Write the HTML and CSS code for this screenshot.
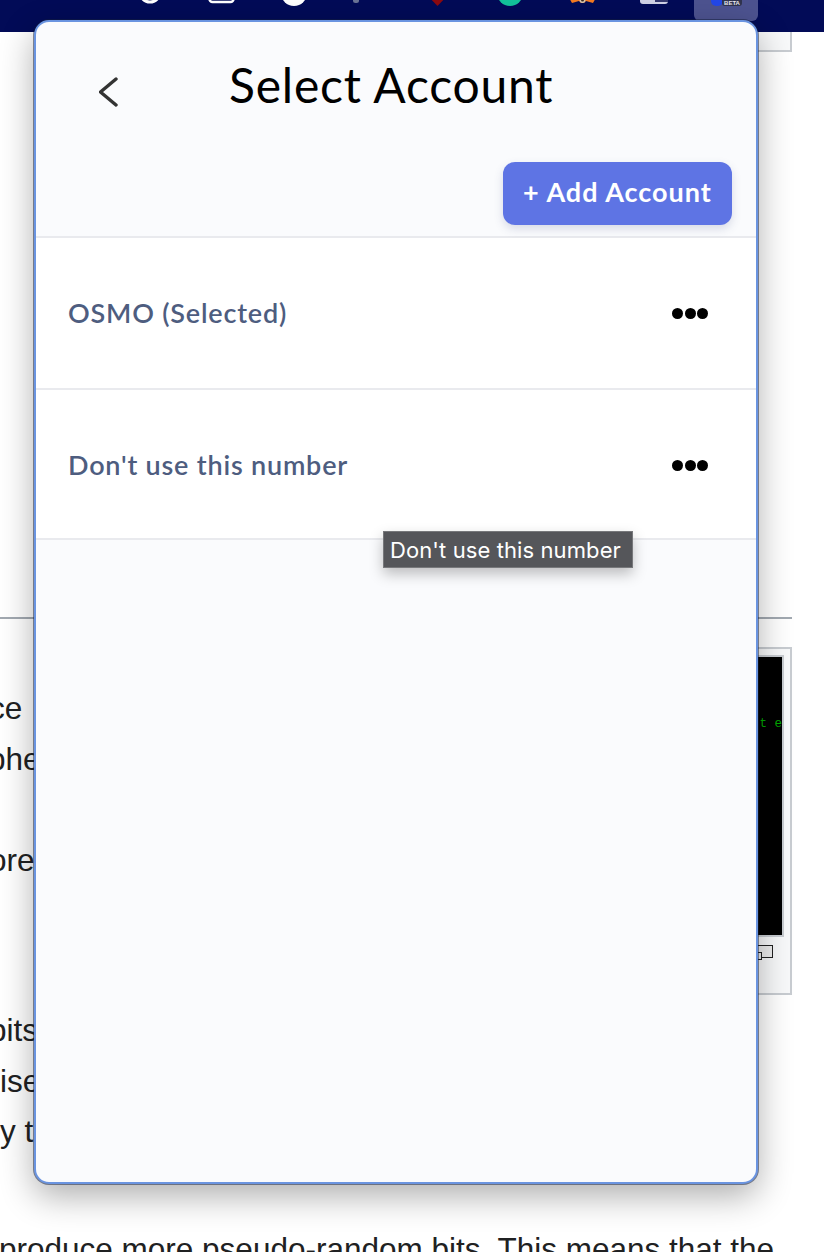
FILE: index.html
```html
<!DOCTYPE html>
<html lang="en">
<head>
<meta charset="utf-8">
<title>Select Account</title>
<link rel="stylesheet" href="styles.css">
</head>
<body>
<header class="toolbar">
  <svg class="strip" width="694" height="32" viewBox="0 0 694 32" aria-hidden="true">
    <circle cx="150" cy="-8" r="10" fill="none" stroke="#fff" stroke-width="3"/>
    <rect x="209.500" y="-14" width="24" height="16" rx="3" fill="none" stroke="#fff" stroke-width="2.500"/>
    <circle cx="294" cy="-7" r="13" fill="#fff"/>
    <rect x="353" y="-6" width="6" height="9" rx="2.500" fill="#6a7396"/>
    <path d="M426 -6 H449 L437.500 6 Z" fill="#8c0a10"/>
    <circle cx="510" cy="-7" r="13" fill="#13c39a"/>
    <path d="M568 -4 H597 L593 3 L586 1 A4 4 0 0 1 579 1 L572 3 Z" fill="#f47a22"/>
    <circle cx="582.500" cy="0" r="3" fill="#d9c7ae"/>
    <circle cx="582.500" cy="0" r="1.500" fill="#3b2b22"/>
    <rect x="640" y="-8" width="28" height="12" rx="3" fill="#d0d2e6"/>
    <rect x="655" y="-4" width="13" height="6" fill="#34386e"/>
  </svg>
  <div class="active-ext">
    <span class="ext-dot"></span>
    <span class="ext-beta">BETA</span>
  </div>
</header>

<main class="article">
  <div class="top-thumb"></div>
  <hr class="rule">
  <section class="body-row">
    <div class="lines">
      <p class="line off-ce">ce</p>
      <p class="line off-phe">phe</p>
      <p class="line">&nbsp;</p>
      <p class="line off-ore">ore</p>
      <p class="line">&nbsp;</p>
      <p class="line">&nbsp;</p>
      <p class="line off-bits">bits</p>
      <p class="line">ise</p>
      <p class="line">y t</p>
    </div>
    <figure class="thumb">
      <div class="screen"><span class="screen-text">t e</span></div>
      <div class="magnify"><span class="mag-big"></span><span class="mag-small"></span></div>
    </figure>
  </section>
  <p class="last-line">produce more pseudo-random bits. This means that the</p>
</main>

<section class="popup">
  <div class="popup-head">
    <div class="title-row">
      <svg class="back" width="24" height="36" viewBox="0 0 24 36" aria-hidden="true">
        <path d="M17 4 L1.500 17 L17 30" fill="none" stroke="#333" stroke-width="3.400" stroke-linecap="round" stroke-linejoin="round"/>
      </svg>
      <h1 class="title">Select Account</h1>
    </div>
    <div class="action-row">
      <button class="add-btn">+ Add Account</button>
    </div>
  </div>
  <div class="account account-first">
    <span class="account-name">OSMO (Selected)</span>
    <span class="dots"><i></i><i></i><i></i></span>
  </div>
  <div class="account">
    <span class="account-name">Don't use this number</span>
    <span class="dots"><i></i><i></i><i></i></span>
  </div>
  <div class="tooltip">Don't use this number</div>
</section>
</body>
</html>
```
FILE: styles.css
```css
* { box-sizing: border-box; }
html, body { margin: 0; padding: 0; }
body {
  width: 824px;
  height: 1252px;
  overflow: hidden;
  position: relative;
  background: #fff;
  font-family: "Liberation Sans", Arial, sans-serif;
  color: #202122;
}

.toolbar {
  display: flex;
  height: 32px;
  background: #020b57;
}
.strip { display: block; flex: none; }
.active-ext {
  position: relative;
  width: 64px;
  height: 21px;
  background: #4d5390;
  border-radius: 0 0 6px 6px;
  overflow: hidden;
}
.ext-dot {
  position: absolute;
  left: 17px;
  top: -8px;
  width: 12px;
  height: 14px;
  border-radius: 5px;
  background: #2347e8;
}
.ext-beta {
  position: absolute;
  left: 28px;
  top: 0;
  width: 20px;
  height: 6px;
  border-radius: 0 0 3px 3px;
  background: #30344f;
  color: #e8e8ee;
  font-size: 6px;
  font-weight: 700;
  line-height: 6px;
  text-align: center;
}

.article { width: 824px; }
.top-thumb {
  width: 60px;
  height: 20px;
  margin-left: 732px;
  background: #f8f9fa;
  border-right: 2px solid #c8ccd1;
  border-bottom: 2px solid #c8ccd1;
}
.rule {
  width: 792px;
  height: 2px;
  margin: 565px 0 0;
  border: 0;
  background: #a2a9b1;
}
.body-row {
  display: flex;
  justify-content: space-between;
  width: 792px;
  margin-top: 28px;
}
.lines { width: 100px; padding-top: 36px; }
.line {
  margin: 0;
  height: 50.800px;
  font-size: 31.500px;
  line-height: 50.800px;
  white-space: nowrap;
}
.off-ce { margin-left: -11px; }
.off-phe { margin-left: -12px; }
.off-ore { margin-left: -11px; }
.off-bits { margin-left: -11px; margin-top: 17px; }
.thumb {
  width: 60px;
  height: 348px;
  margin: 0;
  padding: 6px 6px 0 0;
  background: #f8f9fa;
  border: 2px solid #c8ccd1;
  display: flex;
  flex-direction: column;
  align-items: flex-end;
}
.screen {
  box-sizing: content-box;
  width: 29px;
  height: 218px;
  padding-top: 60px;
  background: #000;
  border: 2px solid #c8ccd1;
  border-left: 0;
  color: #0a0;
  font-family: "Liberation Mono", monospace;
  font-size: 12.500px;
  line-height: 14px;
  text-align: right;
  white-space: pre;
}
.magnify {
  position: relative;
  width: 20px;
  height: 16px;
  margin: 8px 11px 0 0;
}
.mag-big {
  position: absolute;
  left: 0;
  top: 0;
  width: 20px;
  height: 13px;
  border: 1.500px solid #222;
  background: #eee;
}
.mag-small {
  position: absolute;
  left: 4px;
  top: 7px;
  width: 5px;
  height: 8px;
  border: 1.500px solid #222;
  background: #eee;
}
.last-line {
  margin: 67px 0 0 -1px;
  font-size: 31.500px;
  line-height: 50px;
  white-space: nowrap;
}

.popup {
  position: absolute;
  left: 34px;
  top: 20px;
  width: 724px;
  height: 1164px;
  background: #fafbfd;
  border: 2px solid #6a94e0;
  border-radius: 15px;
  box-shadow: 0 0 0 1px rgba(20, 30, 60, .5), 0 12px 34px rgba(0, 0, 0, .32);
  font-family: Lato, "Noto Sans", sans-serif;
}
.popup-head {
  height: 216px;
  border-bottom: 2px solid #e9eaee;
  padding: 0 24px 0 0;
}
.title-row {
  display: flex;
  height: 140px;
  padding-left: 63px;
}
.back { flex: none; margin-top: 53px; }
.title {
  margin: 33px 0 0 106px;
  font-size: 48px;
  font-weight: 400;
  letter-spacing: .8px;
  line-height: 60px;
  color: #000;
  white-space: nowrap;
}
.action-row { display: flex; justify-content: flex-end; }
.add-btn {
  width: 229px;
  height: 63px;
  padding: 0 0 4px;
  border: 0;
  border-radius: 12px;
  background: #5e74e4;
  color: #fff;
  font: 700 27px Lato, "Noto Sans", sans-serif;
  letter-spacing: 1px;
  box-shadow: 0 4px 10px rgba(60, 70, 130, .18);
}
.account {
  display: flex;
  align-items: center;
  justify-content: space-between;
  height: 150px;
  padding: 0 48px 0 32px;
  background: #fff;
  border-bottom: 2px solid #e9eaee;
}
.account-first { height: 152px; padding-bottom: 1px; }
.account-name {
  font-size: 27px;
  font-weight: 600;
  letter-spacing: .8px;
  color: #4e5d7f;
}
.dots { display: flex; gap: 1.500px; margin-top: 2px; }
.dots i {
  width: 11px;
  height: 11px;
  border-radius: 50%;
  background: #000;
}
.tooltip {
  position: absolute;
  left: 347px;
  top: 509px;
  width: 250px;
  height: 37px;
  padding-left: 6px;
  background: #55565a;
  border: 1px solid #77787b;
  color: #fff;
  font: 400 22px/36px Inter, Roboto, sans-serif;
  letter-spacing: .1px;
  white-space: nowrap;
  box-shadow: 0 6px 14px rgba(0, 0, 0, .25);
}
```
